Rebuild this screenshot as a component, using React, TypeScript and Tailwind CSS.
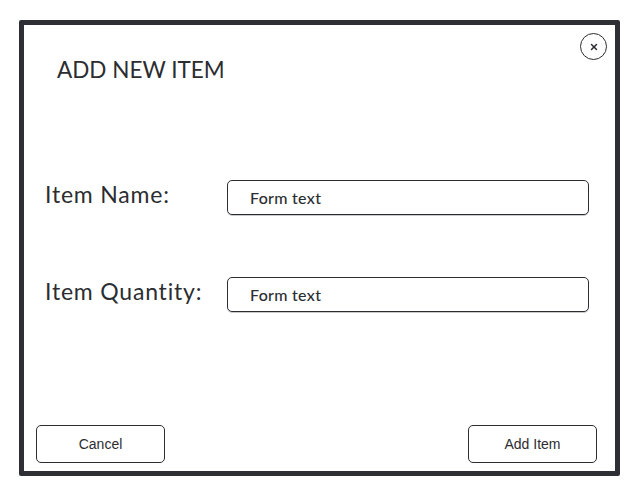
import { X } from "lucide-react";

const ink = "text-[#2b2d31]";

function Field({ label }: { label: string }) {
  return (
    <div className="flex items-center">
      <span className={`w-[182px] -mt-[6px] text-[23px] tracking-[0.8px] leading-none ${ink} font-['Lato',sans-serif]`}>{label}</span>
      <div className="w-[362px] h-[35px] border-[1.5px] border-[#2b2d31] rounded-[5px] flex items-center pl-[22px] shadow-[0_1px_0_#c9cacc]">
        <span className={`text-[16px] tracking-[0.3px] font-medium ${ink} font-['Lato',sans-serif]`}>Form text</span>
      </div>
    </div>
  );
}

function Button({ children }: { children: string }) {
  return (
    <button className={`w-[129px] h-[38px] border-[1.5px] border-[#2b2d31] rounded-[5px] text-[14px] ${ink} font-['Liberation_Sans',sans-serif] bg-white`}>
      {children}
    </button>
  );
}

export default function App() {
  return (
    <div className="w-[641px] h-[496px] bg-white pt-[20px] pl-[19px]">
      <div className="relative w-[601px] h-[456px] border-[5px] border-[#2d2f34] rounded-[2px] flex flex-col">
        <button className="absolute top-[8px] right-[8px] w-[27px] h-[27px] rounded-full border-[1.5px] border-[#2b2d31] flex items-center justify-center">
          <X className="w-[10px] h-[10px] text-[#2b2d31]" strokeWidth={3.5} />
        </button>

        <h1 className={`pt-[30px] pl-[33px] text-[22.5px] leading-[29px] ${ink} font-['Lato',sans-serif]`}>ADD NEW ITEM</h1>

        <div className="mt-[96px] pl-[21px] flex flex-col gap-[62px]">
          <Field label="Item Name:" />
          <Field label="Item Quantity:" />
        </div>

        <div className="mt-auto flex justify-between pl-[12px] pr-[18px] pb-[8px]">
          <Button>Cancel</Button>
          <Button>Add Item</Button>
        </div>
      </div>
    </div>
  );
}
